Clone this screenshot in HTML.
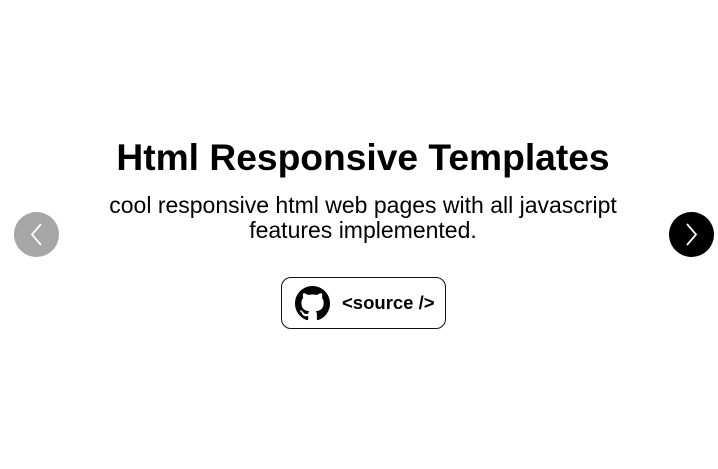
<!DOCTYPE html>
<html><head><style>
body{margin:0;width:718px;height:469px;background:#fff;font-family:"Liberation Sans",sans-serif;position:relative;overflow:hidden}
.t{position:absolute;left:4px;width:718px;text-align:center;top:136px;font-weight:bold;font-size:37.2px;color:#000;margin:0}
.s{position:absolute;left:80px;width:566px;text-align:center;top:193px;font-size:23px;line-height:25px;color:#000}
.btn{position:absolute;left:281px;top:277px;width:163px;height:50px;border:1px solid #111;border-radius:10px;box-sizing:content-box}
.btn svg{position:absolute;left:13px;top:8px}
.btn span{position:absolute;left:60px;top:14px;font-weight:bold;font-size:18.5px;color:#000}
.c{position:absolute;top:212px;width:45px;height:45px;border-radius:50%}
.c svg{position:absolute;left:0;top:0}
</style></head><body>
<div class="c" style="left:14px;background:#a6a6a6"><svg width="45" height="45"><path d="M27 12 L18 22.5 L27 33" stroke="#fff" stroke-width="1.8" fill="none"/></svg></div>
<div class="c" style="left:669px;background:#000"><svg width="45" height="45"><path d="M18 12 L27 22.5 L18 33" stroke="#fff" stroke-width="1.8" fill="none"/></svg></div>
<div class="t">Html Responsive Templates</div>
<div class="s">cool responsive html web pages with all javascript features implemented.</div>
<div class="btn"><svg width="35" height="35" viewBox="0 0 16 16"><path fill="#000" d="M8 0C3.58 0 0 3.58 0 8c0 3.54 2.29 6.53 5.47 7.59.4.07.55-.17.55-.38 0-.19-.01-.82-.01-1.49-2.01.37-2.53-.49-2.69-.94-.09-.23-.48-.94-.82-1.13-.28-.15-.68-.52-.01-.53.63-.01 1.08.58 1.23.82.72 1.21 1.87.87 2.33.66.07-.52.28-.87.51-1.07-1.78-.2-3.64-.89-3.64-3.95 0-.87.31-1.59.82-2.15-.08-.2-.36-1.02.08-2.12 0 0 .67-.21 2.2.82.64-.18 1.32-.27 2-.27.68 0 1.36.09 2 .27 1.53-1.04 2.2-.82 2.2-.82.44 1.1.16 1.92.08 2.12.51.56.82 1.27.82 2.15 0 3.07-1.87 3.75-3.65 3.95.29.25.54.73.54 1.48 0 1.07-.01 1.93-.01 2.2 0 .21.15.46.55.38A8.013 8.013 0 0016 8c0-4.42-3.58-8-8-8z"/></svg><span>&lt;source /&gt;</span></div>
</body></html>
